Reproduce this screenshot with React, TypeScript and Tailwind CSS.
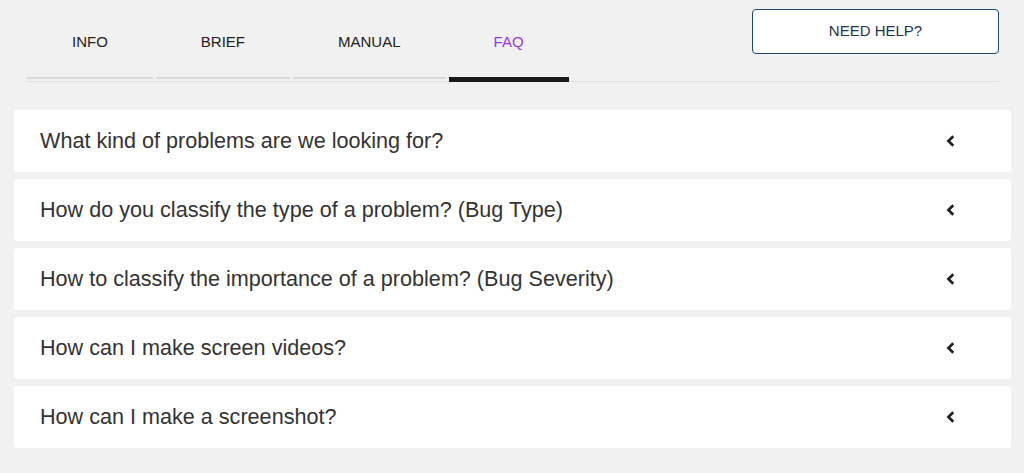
const tabs = [
  { label: "INFO", active: false },
  { label: "BRIEF", active: false },
  { label: "MANUAL", active: false },
  { label: "FAQ", active: true },
];

const questions = [
  "What kind of problems are we looking for?",
  "How do you classify the type of a problem? (Bug Type)",
  "How to classify the importance of a problem? (Bug Severity)",
  "How can I make screen videos?",
  "How can I make a screenshot?",
];

function Chevron() {
  return (
    <svg width="9" height="12" viewBox="0 0 9 12" className="text-[#222]">
      <path d="M7.3 1.2 L2.4 6 L7.3 10.8" fill="none" stroke="currentColor" strokeWidth="2.7" />
    </svg>
  );
}

export default function App() {
  return (
    <div className="min-h-screen bg-[#f1f1f1] font-['Liberation_Sans',Arial,sans-serif]">
      <div className="pl-[27px] pr-[25px]">
        <div className="flex items-start justify-between border-b border-[#dedede]">
          <div className="-mb-px flex h-[82px] gap-[3px]">
            {tabs.map((t) => (
              <button key={t.label} className="flex h-[82px] flex-col px-[45px]">
                <div
                  className={
                    "flex h-[77px] items-center justify-center pt-[7px] text-[15px] " +
                    (t.active ? "text-[#9b38dd]" : "text-[#222]")
                  }
                >
                  {t.label}
                </div>
                {t.active ? (
                  <div className="-mx-[45px] h-[5px] bg-[#1a1a1a]" />
                ) : (
                  <div className="-mx-[45px] h-[2px] bg-[#dadada]" />
                )}
              </button>
            ))}
          </div>
          <button className="mt-[9px] h-[45px] w-[247px] rounded-[4px] border border-[#1f4a72] bg-white text-[15px] text-[#1f3550]">
            NEED HELP?
          </button>
        </div>
      </div>

      <div className="mx-[14px] mt-[28px] flex w-[997px] flex-col gap-[7px]">
        {questions.map((q) => (
          <div
            key={q}
            className="flex h-[62px] items-center justify-between rounded-[3px] bg-white pl-[26px] pr-[56px]"
          >
            <span className="text-[21.6px] text-[#333]">{q}</span>
            <Chevron />
          </div>
        ))}
      </div>
    </div>
  );
}
